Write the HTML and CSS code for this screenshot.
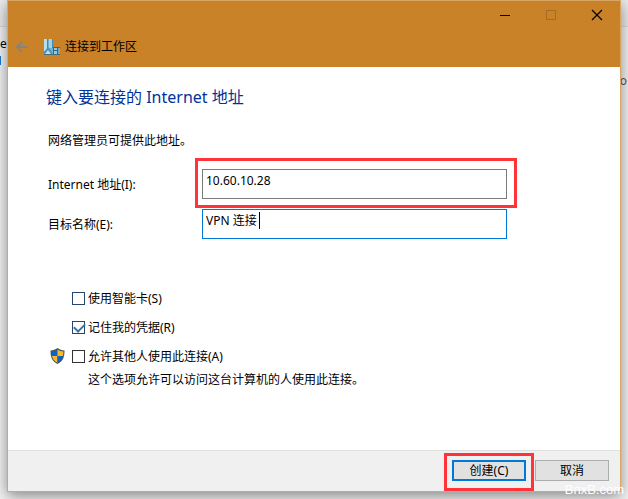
FILE: index.html
```html
<!DOCTYPE html>
<html lang="zh-CN">
<head>
    <meta charset="UTF-8">
    <meta name="viewport" content="width=device-width, initial-scale=1.0">
    <title>连接到工作区</title>
    <link rel="stylesheet" href="styles.css">
</head>
<body>
    <div class="backdrop">
        <div class="backdrop-bar"></div>
        <div class="backdrop-text">
            <div class="backdrop-left">e<div class="backdrop-mark"></div></div>
            <div class="backdrop-right">o</div>
        </div>
    </div>

    <form class="window">
        <header class="titlebar">
            <div class="window-buttons">
                <button type="button" class="window-button" aria-label="最小化">
                    <svg width="12" height="12" viewBox="0 0 12 12"><path d="M1 6.500h10" stroke="#000"/></svg>
                </button>
                <button type="button" class="window-button" aria-label="最大化" disabled>
                    <svg width="12" height="12" viewBox="0 0 12 12"><path d="M1.500 1.500h9v9h-9z" fill="none" stroke="#a66c24"/></svg>
                </button>
                <button type="button" class="window-button" aria-label="关闭">
                    <svg width="12" height="12" viewBox="0 0 12 12"><path d="M1 1l10 10M11 1L1 11" stroke="#000" stroke-width="1.200"/></svg>
                </button>
            </div>
            <div class="title-row">
                <button type="button" class="back-button" aria-label="返回" disabled>
                    <svg width="14" height="12" viewBox="0 0 14 12"><path d="M13 6H2M7 1L2 6l5 5" fill="none" stroke="#88847d" stroke-width="2"/></svg>
                </button>
                <svg class="title-icon" width="17" height="17" viewBox="0 0 17 17">
                    <path d="M0 0h9v16H0z" fill="#6db0d0"/>
                    <path d="M0 0h3v12H0z" fill="#b4e0ee"/>
                    <path d="M5 0h3v9H5z" fill="#9fd3e6"/>
                    <path d="M3 0h1v9H3zM8 0h1v9H8z" fill="#4788ab"/>
                    <path d="M0 13l4-5 4 6v2H0z" fill="#4a8fb5"/>
                    <path d="M1 15l3-4 3 4z" fill="#b9e3ef"/>
                    <path d="M9 8h7v8H9z" fill="#3f6376"/>
                    <path d="M10 9h3v2h-3zM10 12h3v3h-3z" fill="#94cbe0"/>
                    <path d="M14 9h2v6h-2z" fill="#77a9bf"/>
                    <path d="M0 15h16v1H0z" fill="#456b7d"/>
                </svg>
                <span>连接到工作区</span>
            </div>
        </header>

        <main class="content">
            <h1 class="heading">键入要连接的 Internet 地址</h1>
            <p class="hint">网络管理员可提供此地址。</p>

            <div class="field">
                <label for="address">Internet 地址(I):</label>
                <div class="input-wrap">
                    <input class="text-input" type="text" id="address" value="10.60.10.28">
                    <div class="highlight highlight-input"></div>
                </div>
            </div>
            <div class="field">
                <label for="name">目标名称(E):</label>
                <div class="input-wrap">
                    <input class="text-input active" type="text" id="name" value="VPN 连接">
                    <div class="caret"></div>
                </div>
            </div>

            <div class="options">
                <div class="option">
                    <input class="checkbox" type="checkbox" id="smartcard">
                    <label for="smartcard">使用智能卡(S)</label>
                </div>
                <div class="option">
                    <input class="checkbox" type="checkbox" id="remember" checked>
                    <label for="remember">记住我的凭据(R)</label>
                </div>
                <div class="option">
                    <svg class="shield" width="15" height="16" viewBox="0 0 15 16">
                        <path d="M7.500 0C5.500 1.500 3 2.500 0.500 2.500c0 6 1 10.500 7 13.500 6-3 7-7.500 7-13.500-2.500 0-5-1-7-2.500z" fill="#4c5558"/>
                        <path d="M7.500 1.500C6 2.700 4 3.400 1.600 3.600 1.600 5 1.700 6.500 2 8h5.500z" fill="#0b63c5"/>
                        <path d="M7.500 1.500C9 2.700 11 3.400 13.400 3.600c0 1.400-.1 2.900-.4 4.400H7.500z" fill="#fdb827"/>
                        <path d="M2 8c.7 3 2.300 5.300 5.500 6.800V8z" fill="#fdb827"/>
                        <path d="M13 8c-.7 3-2.300 5.300-5.500 6.800V8z" fill="#0b63c5"/>
                    </svg>
                    <input class="checkbox dark" type="checkbox" id="share">
                    <label for="share">允许其他人使用此连接(A)</label>
                </div>
                <p class="note">这个选项允许可以访问这台计算机的人使用此连接。</p>
            </div>
        </main>

        <footer class="footer">
            <div class="button-wrap">
                <button type="submit" class="button primary">创建(C)</button>
                <div class="highlight highlight-button"></div>
            </div>
            <button type="button" class="button">取消</button>
        </footer>
    </form>

    <div class="watermark">BnxB.com</div>
</body>
</html>
```

FILE: styles.css
```css
* {
    box-sizing: border-box;
}
body {
    position: relative;
    display: flex;
    flex-direction: column;
    min-height: 100vh;
    margin: 0;
    padding: 0 7px 7px;
    overflow: hidden;
    background-color: #f3f3f3;
    color: #000;
    font-family: "Noto Sans", "Noto Sans CJK SC", sans-serif;
    font-size: 12px;
    line-height: 18px;
}
h1, p {
    margin: 0;
}
button, input {
    font: inherit;
    color: inherit;
}
svg {
    display: block;
}

/* page behind the dialog */
.backdrop {
    position: absolute;
    inset: 0;
}
.backdrop-bar {
    height: 27px;
    background-color: #ebebeb;
    border-bottom: 1px solid #dadada;
}
.backdrop-text {
    display: flex;
    justify-content: space-between;
    padding-top: 8px;
}
.backdrop-mark {
    width: 1px;
    height: 9px;
    margin-top: 3px;
    background-color: #1a7ad0;
}
.backdrop-right {
    padding: 37px 1px 0 0;
    color: #555;
}

.window {
    position: relative;
    flex: 1;
    display: flex;
    flex-direction: column;
    border: 1px solid #d9a566;
    background-color: #fff;
    box-shadow: 0 4px 14px rgba(0, 0, 0, 0.45);
}
.titlebar {
    padding-bottom: 6px;
    background-color: #ca8228;
}
.window-buttons {
    display: flex;
    justify-content: flex-end;
}
.window-button {
    display: flex;
    align-items: center;
    justify-content: center;
    width: 46px;
    height: 28px;
    padding: 0;
    border: none;
    background: none;
}
.title-row {
    display: flex;
    align-items: center;
    height: 32px;
    padding: 4px 0 0 7px;
}
.back-button {
    padding: 0;
    border: none;
    background: none;
}
.title-icon {
    margin: 0 4px 0 15px;
}

.content {
    flex: 1;
    padding: 18px 40px;
}
.heading {
    margin-left: -2px;
    color: #003399;
    font-size: 16px;
    font-weight: normal;
    line-height: 24px;
}
.hint {
    margin: 23px 0 19px;
}
.field {
    display: flex;
    align-items: center;
    margin-bottom: 10px;
}
.field label {
    width: 154px;
    padding-top: 2px;
}
.input-wrap {
    position: relative;
    flex: 0 1 305px;
}
.text-input {
    display: block;
    width: 100%;
    height: 30px;
    padding: 0 3px 8px;
    border: 1px solid #7a7a7a;
    background-color: #fff;
    outline: none;
}
.text-input.active {
    border-color: #0078d7;
}
.caret {
    position: absolute;
    top: 3px;
    left: 57px;
    width: 1px;
    height: 17px;
    background-color: #000;
}
.highlight {
    position: absolute;
    border: 3px solid #ff3338;
    pointer-events: none;
}
.highlight-input {
    inset: -11px -10px -9px -7px;
}

.options {
    margin-top: 49px;
}
.option {
    position: relative;
    display: flex;
    align-items: center;
    gap: 3px;
    margin-bottom: 9px;
    padding-left: 24px;
}
.option label {
    padding-top: 2px;
}
.checkbox {
    appearance: none;
    width: 13px;
    height: 13px;
    margin: 0;
    border: 1px solid #26476b;
    background-color: #fff;
}
.checkbox.dark {
    border-color: #333;
}
.checkbox:checked::before {
    content: "";
    display: block;
    width: 9px;
    height: 5px;
    margin: 2px 0 0 1px;
    border: solid #41709a;
    border-width: 0 0 2px 2px;
    transform: translateY(-1px) rotate(-45deg);
}
.shield {
    position: absolute;
    top: 2px;
    left: 2px;
}
.note {
    margin-top: -4px;
    padding-left: 40px;
}

.footer {
    display: flex;
    justify-content: flex-end;
    gap: 9px;
    padding: 9px 11px 10px;
    border-top: 1px solid #dfdfdf;
    background-color: #f0f0f0;
}
.button-wrap {
    position: relative;
}
.button {
    display: block;
    width: 74px;
    height: 21px;
    padding: 0;
    border: 1px solid #adadad;
    background-color: #e1e1e1;
    line-height: 17px;
}
.button.primary {
    border: 2px solid #0078d7;
}
.highlight-button {
    inset: -7px -8px -10px;
}

.watermark {
    position: absolute;
    right: 4px;
    bottom: 0;
    color: #fff;
    font-family: "Liberation Sans", Arial, sans-serif;
    font-size: 13px;
}
```
